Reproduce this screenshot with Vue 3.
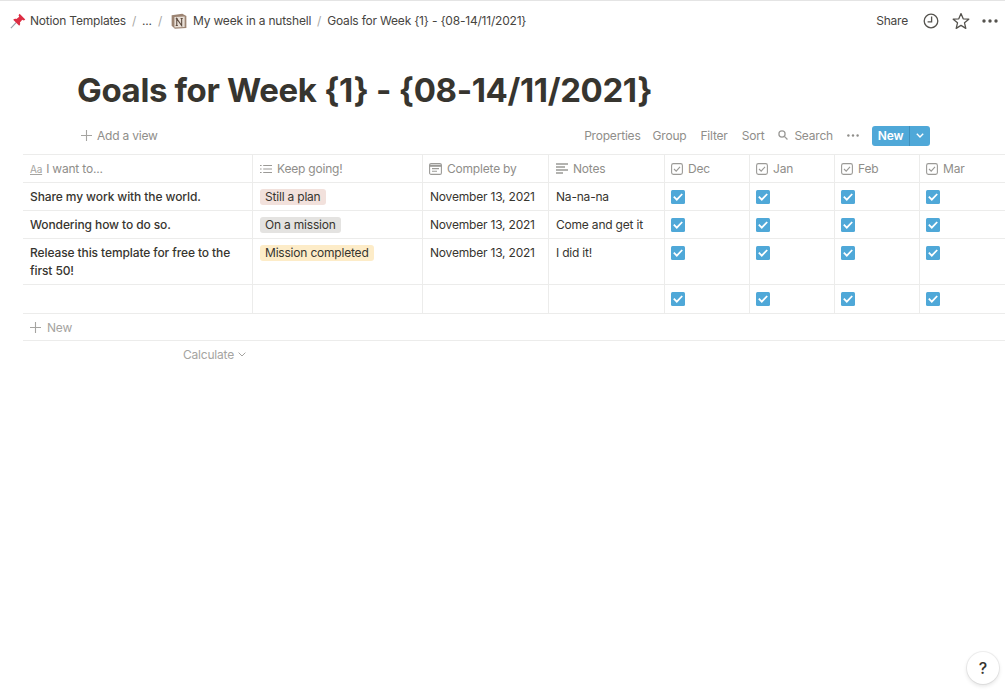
<script setup>
const cols = [
  { name: 'Dec' }, { name: 'Jan' }, { name: 'Feb' }, { name: 'Mar' }
]
const rows = [
  { title: 'Share my work with the world.', tag: 'Still a plan', tone: 'red', date: 'November 13, 2021', notes: 'Na-na-na' },
  { title: 'Wondering how to do so.', tag: 'On a mission', tone: 'gray', date: 'November 13, 2021', notes: 'Come and get it' },
  { title: 'Release this template for free to the first 50!', tag: 'Mission completed', tone: 'yellow', date: 'November 13, 2021', notes: 'I did it!', tall: true },
  { title: '', tag: '', tone: '', date: '', notes: '' }
]
</script>

<template>
  <div class="page">
    <header class="topbar">
      <nav class="crumbs">
        <svg class="pin" width="16" height="16" viewBox="0 0 18 18">
          <path d="M1 17 L7.4 10.2" stroke="#9aa3ad" stroke-width="1.3" fill="none" />
          <path d="M10.8 .8 L17.2 7.2 L15.6 8.4 L13.8 7.6 L11.2 10.8 C11.8 12.6 11.2 13.6 10.4 14.4 L3.6 7.6 C4.6 6.6 6 6.2 7.2 6.8 L10.4 4.2 L9.6 2.4 Z" fill="#dd2e44" />
        </svg>
        <span>Notion Templates</span>
        <span class="sep">/</span>
        <span>...</span>
        <span class="sep">/</span>
        <svg class="nlogo" width="16" height="16" viewBox="0 0 15 15">
          <path d="M.6 2.2 L10.6 .6 L14.4 2.8 V14 L3.6 14.8 L.6 12 Z" fill="#9c8472" />
          <path d="M3.2 3.8 L12.8 3.2 V13.2 L3.2 13.6 Z" fill="#e8dfd6" />
          <path d="M5.4 11.8 V5.4 L10 11.8 V5.2 M4.4 5.4 H6.4 M9 5.2 H11 M4.4 11.8 H6.4" stroke="#5c4a3e" stroke-width="1" fill="none" />
        </svg>
        <span>My week in a nutshell</span>
        <span class="sep">/</span>
        <span>Goals for Week {1} - {08-14/11/2021}</span>
      </nav>
      <div class="actions">
        <span class="share">Share</span>
        <svg class="clock" width="16" height="16" viewBox="0 0 16 16" fill="none" stroke="#55534e" stroke-width="1.3">
          <circle cx="8" cy="8" r="6.8" />
          <path d="M8.6 3.4 V8.8 H4.6" />
        </svg>
        <svg class="star" width="18" height="18" viewBox="0 0 18 18" fill="none" stroke="#55534e" stroke-width="1.3" stroke-linejoin="round">
          <path d="M9 1.6 L11.2 6.8 L16.8 7.2 L12.5 10.8 L13.8 16.4 L9 13.4 L4.2 16.4 L5.5 10.8 L1.2 7.2 L6.8 6.8 Z" />
        </svg>
        <svg width="16" height="4" viewBox="0 0 16 4" fill="#55534e">
          <circle cx="2" cy="2" r="1.7" /><circle cx="8" cy="2" r="1.7" /><circle cx="14" cy="2" r="1.7" />
        </svg>
      </div>
    </header>

    <h1 class="title">Goals for Week {1} - {08-14/11/2021}</h1>

    <div class="toolbar">
      <div class="addview">
        <svg width="11" height="11" viewBox="0 0 11 11" stroke="#a5a4a1" stroke-width="1.1"><path d="M5.5 0 V11 M0 5.5 H11" /></svg>
        <span>Add a view</span>
      </div>
      <div class="tools">
        <span class="props">Properties</span>
        <span>Group</span>
        <span>Filter</span>
        <span>Sort</span>
        <span class="search">
          <svg width="10" height="10" viewBox="0 0 11 11" fill="none" stroke="#9b9a97" stroke-width="1.4"><circle cx="4.4" cy="4.4" r="3.4" /><path d="M7 7 L10.4 10.4" /></svg>
          Search
        </span>
        <svg class="more" width="12" height="3" viewBox="0 0 12 3" fill="#8f8e8a"><circle cx="1.4" cy="1.5" r="1.2" /><circle cx="6" cy="1.5" r="1.2" /><circle cx="10.6" cy="1.5" r="1.2" /></svg>
        <div class="newbtn">
          <span class="newlabel">New</span>
          <span class="newcaret">
            <svg width="8" height="5" viewBox="0 0 8 5" fill="none" stroke="#fff" stroke-width="1.4"><path d="M.8 .8 L4 4 L7.2 .8" /></svg>
          </span>
        </div>
      </div>
    </div>

    <section class="table">
      <div class="row head">
        <div class="cell">
          <span class="aa">Aa</span>
          I want to...
        </div>
        <div class="cell">
          <svg width="12" height="10" viewBox="0 0 12 10" stroke="#9b9a97" stroke-width="1.1"><path d="M0 1.5 H1.6 M3.2 1.5 H12 M0 5 H1.6 M3.2 5 H12 M0 8.5 H1.6 M3.2 8.5 H12" /></svg>
          Keep going!
        </div>
        <div class="cell tight">
          <svg width="13" height="13" viewBox="0 0 13 13" fill="none" stroke="#9b9a97" stroke-width="1.1"><rect x=".6" y="1.6" width="11.8" height="10.8" rx="1.5" /><path d="M.6 3.8 H12.4" stroke-width="2" /><path d="M3 6.6 H10 M3 9.2 H8" /></svg>
          Complete by
        </div>
        <div class="cell">
          <svg width="12" height="11" viewBox="0 0 12 11" stroke="#9b9a97" stroke-width="1.3"><path d="M0 1 H12 M0 4 H9 M0 7 H12 M0 10 H7" /></svg>
          Notes
        </div>
        <div v-for="c in cols" :key="c.name" class="cell tight">
          <svg width="12" height="12" viewBox="0 0 12 12" fill="none" stroke="#9b9a97" stroke-width="1.1"><rect x=".6" y=".6" width="10.8" height="10.8" rx="1.8" /><path d="M3 6 L5.2 8.2 L9 3.8" /></svg>
          {{ c.name }}
        </div>
      </div>

      <div v-for="(r, i) in rows" :key="i" class="row" :class="{ tall: r.tall, last: i === rows.length - 1 }">
        <div class="cell body strong">{{ r.title }}</div>
        <div class="cell body">
          <span v-if="r.tag" class="tag" :class="r.tone">{{ r.tag }}</span>
        </div>
        <div class="cell body">{{ r.date }}</div>
        <div class="cell body">{{ r.notes }}</div>
        <div v-for="c in cols" :key="c.name" class="cell body">
          <span class="check">
            <svg width="10" height="8" viewBox="0 0 10 8" fill="none" stroke="#fff" stroke-width="1.8"><path d="M.8 3.6 L3.8 6.6 L9.2 1" /></svg>
          </span>
        </div>
      </div>

      <div class="addrow">
        <svg width="11" height="11" viewBox="0 0 11 11" stroke="#a5a4a1" stroke-width="1.1"><path d="M5.5 0 V11 M0 5.5 H11" /></svg>
        New
      </div>
      <div class="calc">
        <span>Calculate</span>
        <svg width="8" height="5" viewBox="0 0 8 5" fill="none" stroke="#a5a4a1" stroke-width="1"><path d="M.6 .6 L4 4 L7.4 .6" /></svg>
      </div>
    </section>

    <button class="help">?</button>
  </div>
</template>

<style>
html, body { margin: 0; background: #fff; }
</style>

<style scoped>
.page {
  position: relative;
  width: 1005px;
  height: 691px;
  overflow: hidden;
  box-sizing: border-box;
  border-top: 1px solid #e4e4e4;
  background: #fff;
  color: #37352f;
  font-family: Inter, "Liberation Sans", sans-serif;
  font-size: 12px;
  letter-spacing: -0.2px;
}
.topbar {
  height: 39px;
  display: flex;
  align-items: center;
  justify-content: space-between;
  padding: 0 7px 0 10px;
}
.crumbs { display: flex; align-items: center; color: #47453f; }
.pin { margin-right: 4px; }
.sep { color: #a8a7a4; margin: 0 6px; }
.nlogo { margin-right: 6px; margin-left: 3px; }
.actions { display: flex; align-items: center; }
.share { margin-right: 15px; color: #47453f; }
.clock { margin-right: 13px; }
.star { margin-right: 12px; }
.title {
  margin: 30px 0 0 77px;
  font-size: 33px;
  line-height: 40px;
  font-weight: 700;
  letter-spacing: -0.37px;
  color: #37352f;
}
.toolbar {
  margin: 12px 0 0 81px;
  height: 26px;
  display: flex;
  align-items: center;
  justify-content: space-between;
  padding-right: 75px;
  color: #8f8e8a;
}
.addview { display: flex; align-items: center; gap: 5px; }
.tools { display: flex; align-items: center; gap: 14px; }
.props { margin-right: -2px; }
.search { display: flex; align-items: center; gap: 6px; }
.more { margin-right: -1px; }
.newbtn {
  display: flex;
  height: 20px;
  margin-top: 1px;
  border-radius: 3px;
  overflow: hidden;
  background: #4fa8d8;
  color: #fff;
  font-weight: 600;
}
.newlabel { width: 38px; box-sizing: border-box; line-height: 20px; text-align: center; border-right: 1px solid #3e8fbc; }
.newcaret { width: 20px; display: flex; align-items: center; justify-content: center; }
.table { margin: 6px 0 0 23px; }
.row {
  display: grid;
  grid-template-columns: 229px 170px 126px 116px 85px 85px 85px 86px;
  height: 28px;
  box-sizing: border-box;
  border-bottom: 1px solid #ececeb;
}
.row.head { border-top: 1px solid #ececeb; height: 29px; color: #8f8e8a; }
.row.tall { height: 46px; }
.row.last { height: 29px; }
.cell {
  display: flex;
  align-items: center;
  gap: 5px;
  padding: 0 7px;
  border-left: 1px solid #ececeb;
  min-width: 0;
}
.cell:first-child { border-left: 0; gap: 4px; }
.cell.tight { padding-left: 6px; gap: 5px; }
.body { align-items: flex-start; padding-top: 5px; line-height: 18px; color: #37352f; white-space: nowrap; }
.strong { font-weight: 500; white-space: normal; letter-spacing: -0.1px; }
.aa { font-size: 10px; text-decoration: underline; color: #a5a4a1; }
.tag {
  display: inline-block;
  height: 16px;
  line-height: 16px;
  padding: 0 5px;
  margin-top: 1px;
  border-radius: 3px;
}
.tag.red { background: #f2e1dc; }
.tag.gray { background: #e4e3e1; }
.tag.yellow { background: #fdecc8; }
.check {
  width: 14px;
  height: 14px;
  margin: 2px 0 0 -1px;
  border-radius: 1.5px;
  background: #4fa8d8;
  display: flex;
  align-items: center;
  justify-content: center;
}
.addrow {
  height: 27px;
  box-sizing: border-box;
  border-bottom: 1px solid #ececeb;
  display: flex;
  align-items: center;
  gap: 6px;
  padding-left: 7px;
  color: #a5a4a1;
}
.calc {
  width: 223px;
  height: 27px;
  display: flex;
  align-items: center;
  justify-content: flex-end;
  gap: 4px;
  color: #a5a4a1;
}
.help {
  position: absolute;
  right: 6px;
  bottom: 7px;
  width: 32px;
  height: 32px;
  padding: 0;
  border: 0;
  border-radius: 50%;
  background: #fff;
  box-shadow: 0 0 0 1px rgba(15, 15, 15, 0.06), 0 2px 4px rgba(15, 15, 15, 0.12);
  color: #37352f;
  font-family: Inter, "Liberation Sans", sans-serif;
  font-size: 16px;
  font-weight: 500;
}
</style>
